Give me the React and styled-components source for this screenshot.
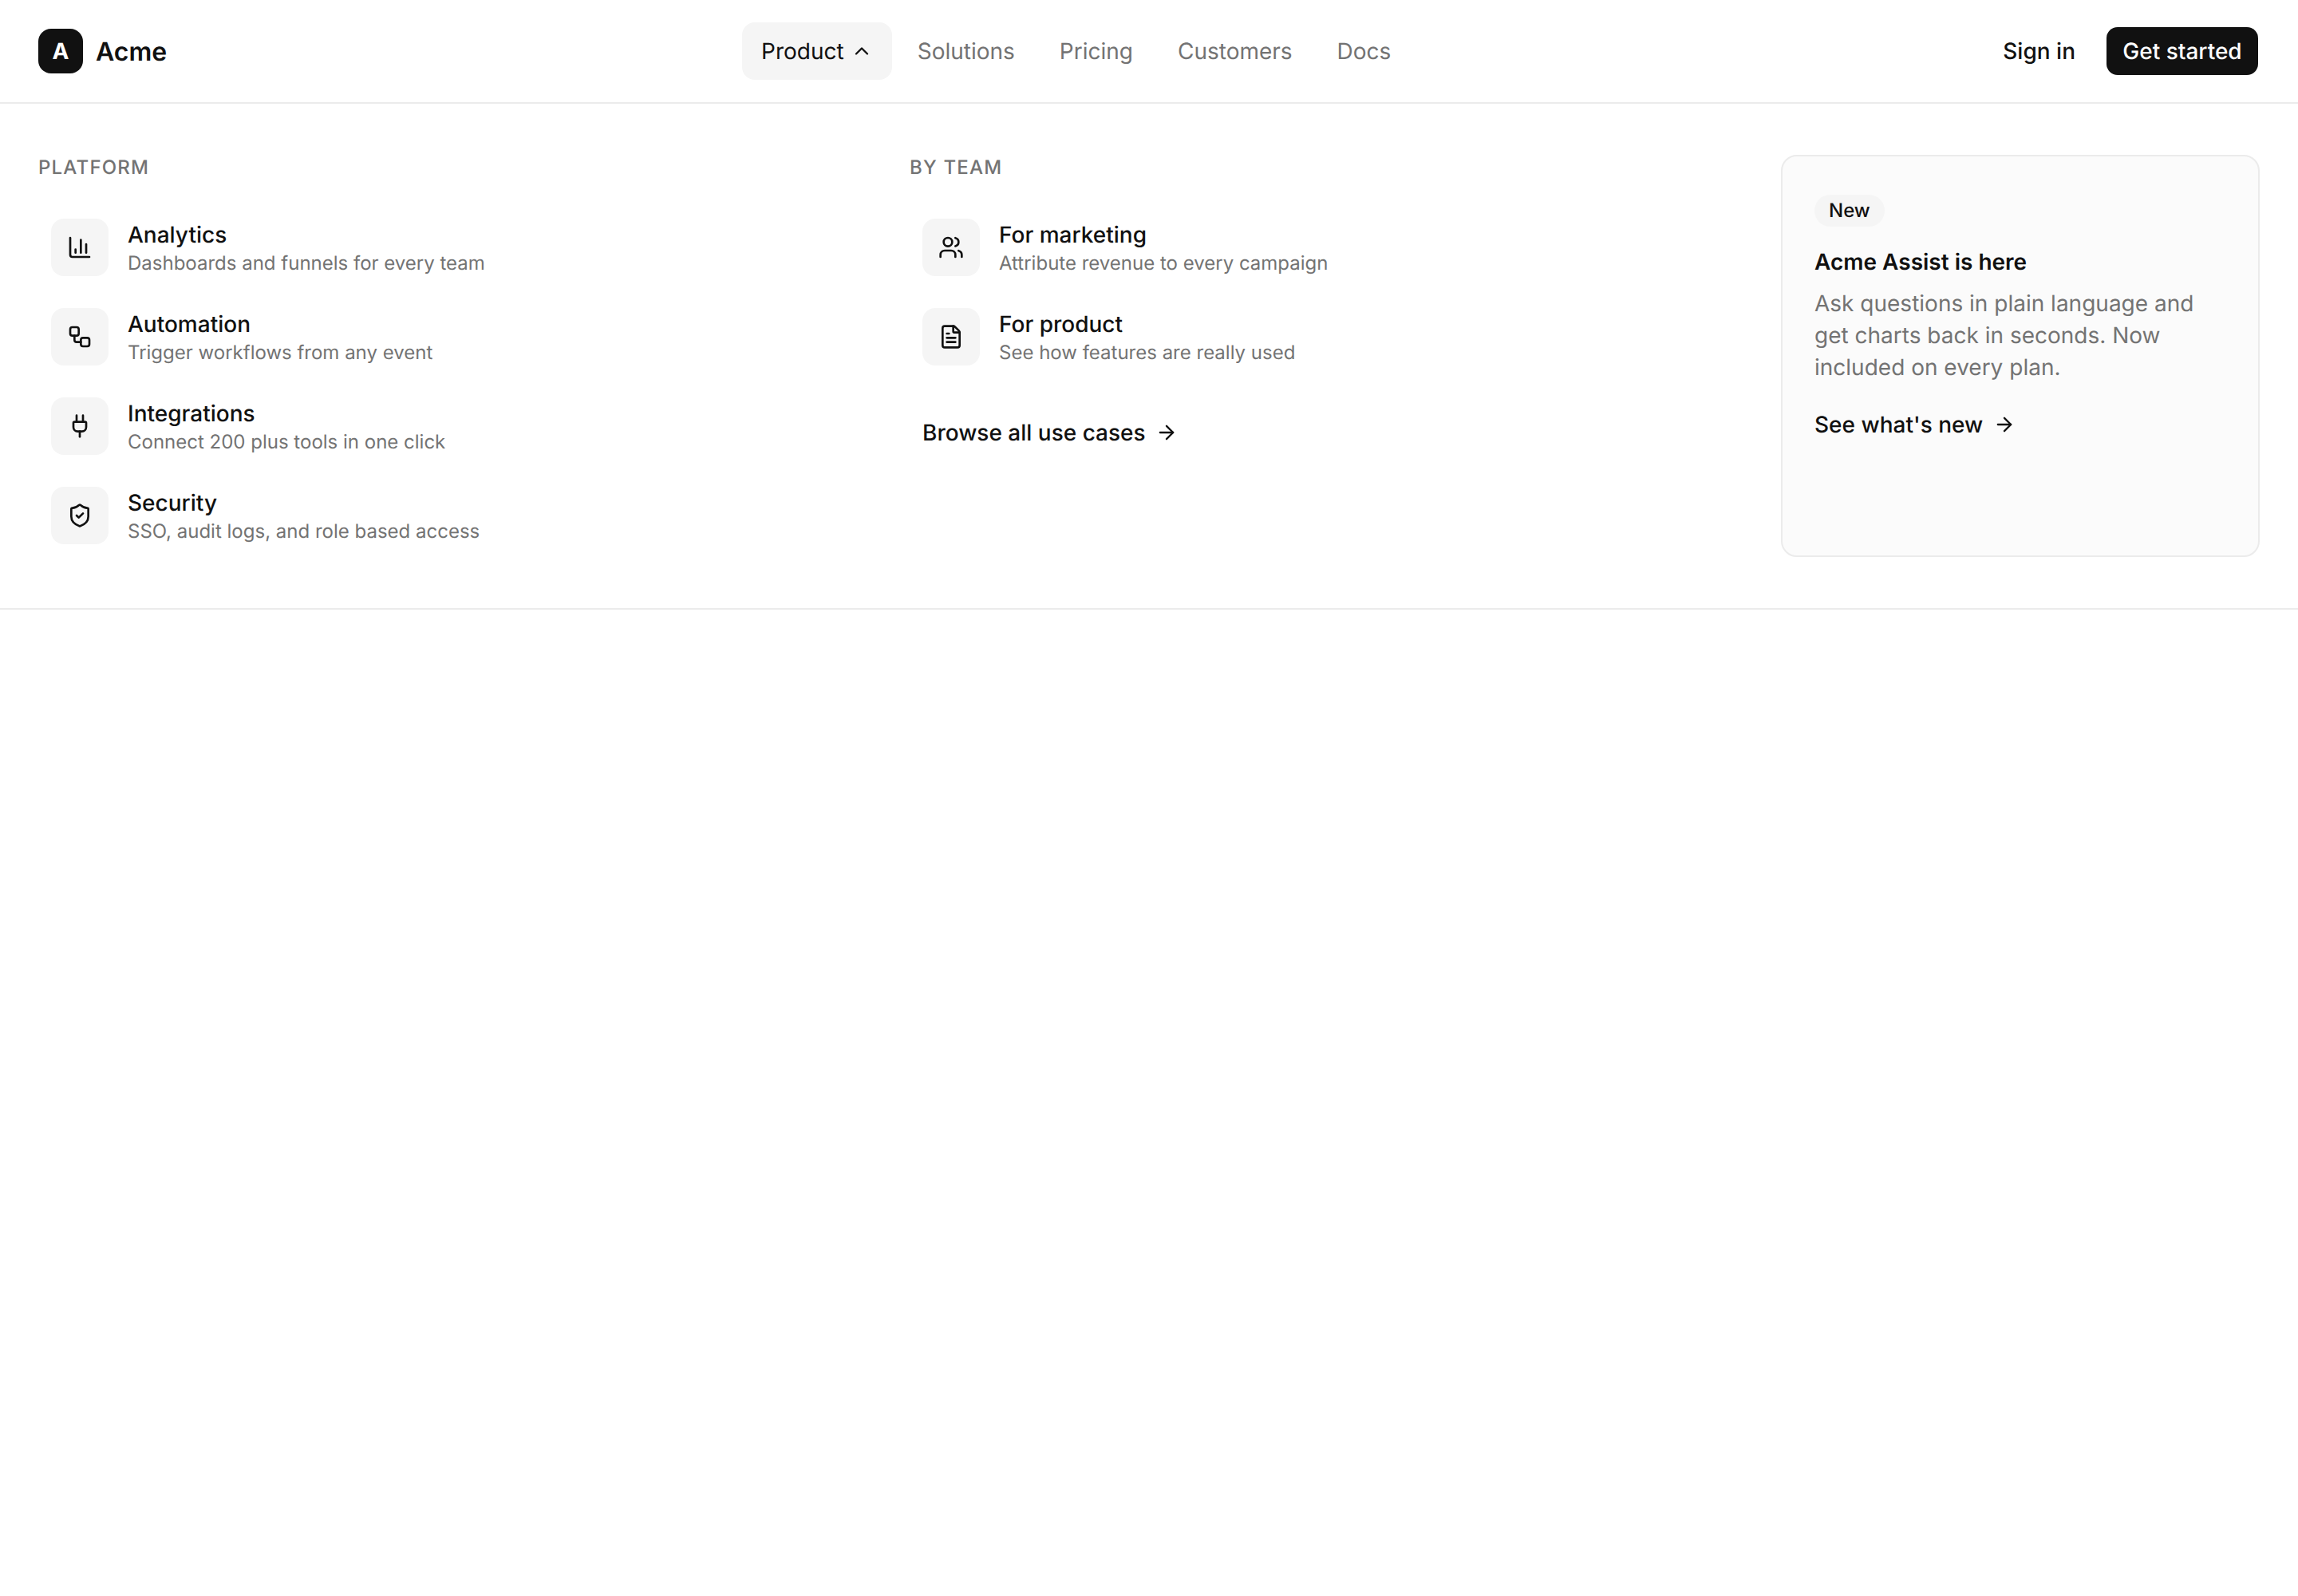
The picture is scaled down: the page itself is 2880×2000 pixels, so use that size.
import React from 'react';
import styled, { createGlobalStyle } from 'styled-components';
import {
  ArrowRight,
  ChartColumn,
  ChevronUp,
  FileText,
  Plug,
  ShieldCheck,
  Users,
  Workflow,
} from 'lucide-react';

const platformLinks = [
  { icon: ChartColumn, title: 'Analytics', text: 'Dashboards and funnels for every team' },
  { icon: Workflow, title: 'Automation', text: 'Trigger workflows from any event' },
  { icon: Plug, title: 'Integrations', text: 'Connect 200 plus tools in one click' },
  { icon: ShieldCheck, title: 'Security', text: 'SSO, audit logs, and role based access' },
];

const teamLinks = [
  { icon: Users, title: 'For marketing', text: 'Attribute revenue to every campaign' },
  { icon: FileText, title: 'For product', text: 'See how features are really used' },
];

const navLinks = ['Solutions', 'Pricing', 'Customers', 'Docs'];

const MenuColumn = ({ title, links, children }) => (
  <Column>
    <ColumnTitle>{title}</ColumnTitle>
    <MenuList>
      {links.map(({ icon: Icon, title, text }) => (
        <MenuItem key={title} href="#">
          <IconTile>
            <Icon size={32} />
          </IconTile>
          <div>
            <ItemTitle>{title}</ItemTitle>
            <ItemText>{text}</ItemText>
          </div>
        </MenuItem>
      ))}
    </MenuList>
    {children}
  </Column>
);

const App = () => (
  <>
    <GlobalStyle />
    <Header>
      <Brand href="#">
        <Logo>A</Logo>
        <BrandName>Acme</BrandName>
      </Brand>
      <Nav>
        <NavLink href="#" $active>
          Product
          <ChevronUp size={28} />
        </NavLink>
        {navLinks.map(label => (
          <NavLink key={label} href="#">{label}</NavLink>
        ))}
      </Nav>
      <Actions>
        <Button>Sign in</Button>
        <Button $primary>Get started</Button>
      </Actions>
    </Header>
    <MegaMenu>
      <MenuColumn title="Platform" links={platformLinks} />
      <MenuColumn title="By team" links={teamLinks}>
        <BrowseLink href="#">
          Browse all use cases
          <ArrowRight size={28} />
        </BrowseLink>
      </MenuColumn>
      <Promo>
        <Badge>New</Badge>
        <PromoTitle>Acme Assist is here</PromoTitle>
        <PromoText>
          Ask questions in plain language and get charts back in seconds. Now included on every plan.
        </PromoText>
        <PromoLink href="#">
          See what's new
          <ArrowRight size={28} />
        </PromoLink>
      </Promo>
    </MegaMenu>
  </>
);

const GlobalStyle = createGlobalStyle`
  * {
    box-sizing: border-box;
  }

  body {
    margin: 0;
    background: #fff;
    color: #111;
    font-family: Inter, "Liberation Sans", sans-serif;
    font-size: 28px;
    line-height: 40px;
    text-rendering: geometricPrecision;
    -webkit-font-smoothing: antialiased;
  }

  a {
    color: inherit;
    text-decoration: none;
  }

  svg {
    flex-shrink: 0;
  }
`

const Header = styled.header`
  display: flex;
  align-items: center;
  justify-content: space-between;
  height: 130px;
  padding: 0 48px;
  border-bottom: 2px solid #ebebeb;
`

const Brand = styled.a`
  display: flex;
  align-items: center;
  gap: 16px;
`

const BrandName = styled.span`
  padding-top: 2px;
  font-size: 32px;
  font-weight: 600;
`

const Logo = styled.span`
  display: flex;
  align-items: center;
  justify-content: center;
  width: 56px;
  height: 56px;
  border-radius: 16px;
  background: #111;
  color: #fff;
  font-weight: 700;
`

const Nav = styled.nav`
  display: flex;
  align-items: center;
  gap: 8px;
`

const NavLink = styled.a`
  display: flex;
  align-items: center;
  gap: 8px;
  height: 72px;
  padding: 0 24px;
  border-radius: 16px;
  background: ${props => props.$active ? '#f5f5f5' : 'transparent'};
  && {
    color: ${props => props.$active ? '#111' : '#737373'};
  }
`

const Actions = styled.div`
  display: flex;
  align-items: center;
  gap: 15px;
`

const Button = styled.button`
  height: 64px;
  min-width: ${props => props.$primary ? '194px' : '0'};
  padding: 0 20px;
  border: 2px solid transparent;
  border-radius: 16px;
  background: ${props => props.$primary ? '#111' : 'transparent'};
  background-clip: padding-box;
  color: ${props => props.$primary ? '#fff' : '#111'};
  font: inherit;
  font-weight: 500;
  text-rendering: inherit;
`

const MegaMenu = styled.section`
  display: grid;
  grid-template-columns: 1fr 1fr 600px;
  gap: 64px;
  padding: 64px 48px;
  border-bottom: 2px solid #ebebeb;
`

const Column = styled.div`
  display: flex;
  flex-direction: column;
  align-items: flex-start;
`

const ColumnTitle = styled.h3`
  margin: 0 0 32px;
  color: #737373;
  font-size: 24px;
  font-weight: 500;
  line-height: 32px;
  letter-spacing: 0.05em;
  text-transform: uppercase;
`

const MenuList = styled.div`
  display: flex;
  flex-direction: column;
  align-self: stretch;
  gap: 8px;
`

const MenuItem = styled.a`
  display: flex;
  gap: 24px;
  padding: 16px;
`

const IconTile = styled.span`
  display: flex;
  align-items: center;
  justify-content: center;
  width: 72px;
  height: 72px;
  border-radius: 16px;
  background: #f5f5f5;
`

const ItemTitle = styled.div`
  font-weight: 500;
`

const ItemText = styled.div`
  color: #737373;
  font-size: 24px;
  line-height: 32px;
`

const ArrowLink = styled.a`
  display: inline-flex;
  align-items: center;
  gap: 12px;
  font-weight: 500;
`

const BrowseLink = styled(ArrowLink)`
  margin-top: 48px;
  padding: 0 16px;
`

const PromoLink = styled(ArrowLink)`
  gap: 13px;
`

const Promo = styled.aside`
  display: flex;
  flex-direction: column;
  align-items: flex-start;
  padding: 48px 40px;
  border: 2px solid #ebebeb;
  border-radius: 20px;
  background: #fbfbfb;
`

const Badge = styled.span`
  height: 40px;
  padding: 0 18px;
  border-radius: 20px;
  background: #f5f5f5;
  font-size: 24px;
  font-weight: 500;
`

const PromoTitle = styled.div`
  margin-top: 24px;
  font-weight: 600;
`

const PromoText = styled.p`
  margin: 12px 0 32px;
  color: #737373;
`

export default App;
